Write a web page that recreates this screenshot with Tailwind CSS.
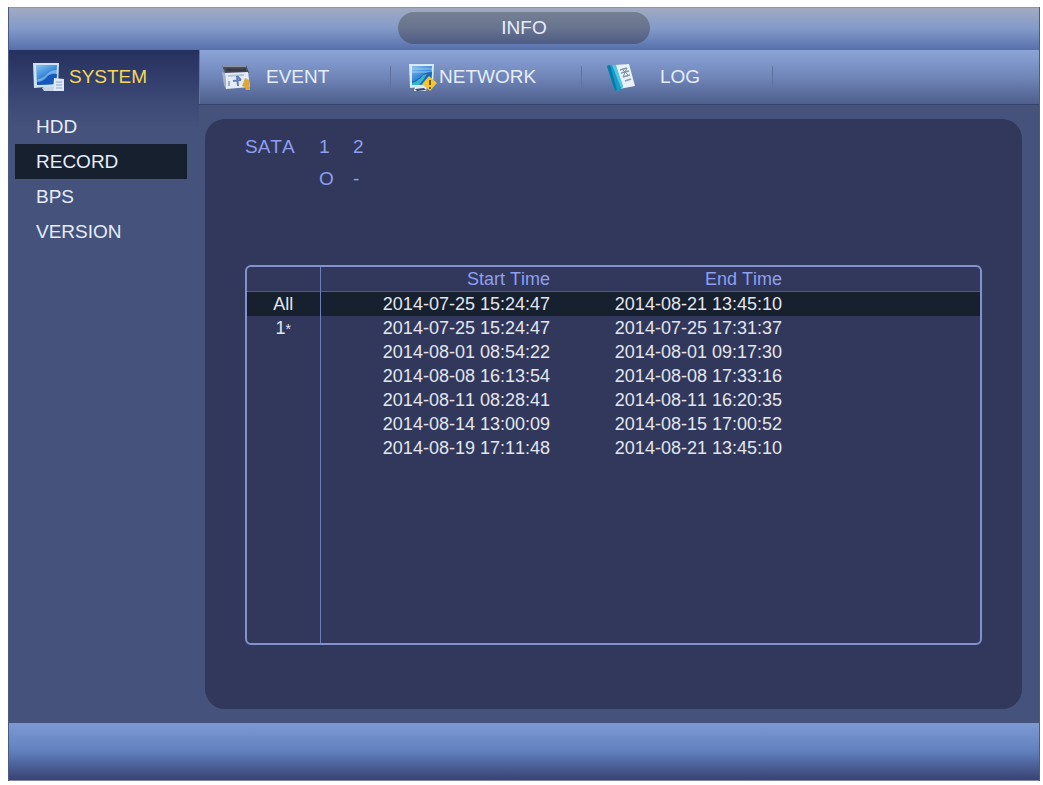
<!DOCTYPE html>
<html lang="en">
<head>
    <meta charset="UTF-8">
    <meta name="viewport" content="width=device-width, initial-scale=1.0">
    <title>INFO</title>
    <script src="https://cdn.jsdelivr.net/npm/@tailwindcss/browser@4"></script>
</head>
<body class="bg-white font-['Liberation_Sans',sans-serif] [font-kerning:none]">
  <div class="flex min-h-screen flex-col pt-[7px] pr-[3px] pb-1 pl-2">
    <div class="flex flex-1 flex-col border-x border-[#4b5a82] bg-[#44527c] text-[19px] leading-6 text-[#e6edfb]">

      <!-- title bar -->
      <header class="flex h-[43px] items-start justify-center border-t border-[#8c94a6] bg-linear-to-b from-[#a0abc0] via-[#8299c9] to-[#5670ab] pt-1">
        <h1 class="flex h-8 w-[252px] items-center justify-center rounded-full bg-linear-to-b from-[#767f93] via-[#67738f] to-[#4e5c84]">INFO</h1>
      </header>

      <!-- tabs -->
      <nav class="flex h-[54px] bg-linear-to-b from-[#8ba4d8] via-[#7086b9] to-[#4e5f8b]">
        <button class="flex w-[190px] items-center gap-1 bg-linear-to-b from-[#263060] to-[#3d4a76] pl-6 text-[#f2d95c]">
          <svg class="h-8 w-8" viewBox="0 0 32 32">
            <defs>
              <linearGradient id="screen" x1="0" y1="0" x2="0.6" y2="1">
                <stop offset="0" stop-color="#8cc4ee"/>
                <stop offset="0.5" stop-color="#3f8edb"/>
                <stop offset="1" stop-color="#1d5cb8"/>
              </linearGradient>
            </defs>
            <path d="M9 27 L15 24 L21 25 L20 30 L11 30Z" fill="#c3d3e6"/>
            <path d="M0 2 L26 2 L25 25 L1 27Z" fill="#cfe2f2"/>
            <path d="M3 4 L24 4 L23 23 L4 24Z" fill="url(#screen)"/>
            <path d="M4 20 Q9 20 13 15 Q17 11 24 13 L23 23 L4 24Z" fill="#1557bd"/>
            <path d="M5 18 Q10 18 14 13 Q18 9 24 9 L24 13 Q17 12 13 17 Q9 21 4 21Z" fill="#9dd0f5" opacity="0.6"/>
            <path d="M21 17 L31 18 L31 30 L20 30Z" fill="#dce8f5"/>
            <path d="M23 21h6M23 24h6M23 27h6" stroke="#8fa9ca" stroke-width="1"/>
          </svg>
          SYSTEM
        </button>
        <button class="flex w-[191px] items-center gap-[14px] border-l border-[#6077a8] pl-5">
          <svg class="h-8 w-8" viewBox="0 0 32 32">
            <path d="M2 4 L26 4 L29 12 L5 12Z" fill="#4a4f59"/>
            <path d="M2 4 L26 4 L26 6 L3 6Z" fill="#8b929d"/>
            <path d="M6 9h20" stroke="#363b45" stroke-width="3"/>
            <path d="M5 12 L28 11 L30 26 L6 28Z" fill="#e4ecf6"/>
            <path d="M2 11 L5 12 L6 28 L4 24Z" fill="#a5b4cc"/>
            <path d="M8 15 L24 14" stroke="#b4c3d8" stroke-width="2"/>
            <path d="M17 15 L18 25 M13 20 L21 19 M17 15 L21 19" stroke="#5c7fb8" stroke-width="2"/>
            <path d="M9 20v5" stroke="#9cadcb" stroke-width="2"/>
            <path d="M25 17 L29 19 L30 29 L26 29 L25 26 L22 25Z" fill="#dfa739"/>
          </svg>
          EVENT
        </button>
        <div class="my-4 border-l border-[#60739f]"></div>
        <button class="flex w-[190px] items-center pl-4">
          <svg class="h-8 w-8" viewBox="0 0 32 32">
            <path d="M8 26 L15 24 L20 26 L19 30 L7 30Z" fill="#e4edf7"/>
            <path d="M8 28 L17 27 L19 29 L10 30Z" fill="#394a6a"/>
            <path d="M2 3 L27 3 L26 25 L3 27Z" fill="#d8e9f4"/>
            <path d="M5 5 L25 5 L24 23 L5 24Z" fill="url(#screen)"/>
            <path d="M5 8h20M5 11h19" stroke="#bfe5f3" stroke-width="1" opacity="0.7"/>
            <path d="M5 20 Q10 20 14 15 Q18 11 25 11 L24 23 L5 24Z" fill="#1768b9"/>
            <path d="M5 22 Q12 20 16 14 L20 13 Q16 20 12 24 L5 24Z" fill="#39b4cf"/>
            <path d="M22 15 L30 22 L23 30 L15 23Z" fill="#f3c52f"/>
            <path d="M23 19v5M23 26v2" stroke="#745b16" stroke-width="2"/>
          </svg>
          NETWORK
        </button>
        <div class="my-4 border-l border-[#60739f]"></div>
        <button class="flex w-[190px] items-center gap-[22px] pl-6">
          <svg class="h-8 w-8" viewBox="0 0 32 32">
            <path d="M9 4 L23 3 L29 25 L13 28Z" fill="#e8f2fa"/>
            <path d="M1 5 L9 4 L17 26 L11 31 L8 28Z" fill="#159cc7"/>
            <path d="M1 5 L4 4 L11 29 L9 30Z" fill="#087aa9"/>
            <path d="M6 4 L10 4 L17 25 L15 27Z" fill="#56c5e4"/>
            <path d="M14 9l7-2M15 12l8-2M17 16l7-2M19 20l6-2" stroke="#8797aa" stroke-width="1.5"/>
            <path d="M16 8l6 6M21 7l-4 9" stroke="#8291a4" stroke-width="1"/>
          </svg>
          LOG
        </button>
        <div class="my-4 border-l border-[#60739f]"></div>
      </nav>

      <main class="flex flex-1">
        <aside class="mr-[6px] w-[190px] bg-linear-to-b from-[#3d4a76] to-[#44527c] to-[24px]">
          <ul class="pt-[5px] pr-3 pl-[6px]">
            <li><a href="#" class="block h-[35px] pl-[21px] leading-[35px]">HDD</a></li>
            <li><a href="#" class="block h-[35px] bg-[#17202e] pl-[21px] leading-[35px]">RECORD</a></li>
            <li><a href="#" class="block h-[35px] pl-[21px] leading-[35px]">BPS</a></li>
            <li><a href="#" class="block h-[35px] pl-[21px] leading-[35px]">VERSION</a></li>
          </ul>
        </aside>

        <section class="-ml-[6px] flex flex-1 flex-col border-t border-[#35426c] pt-[14px] pr-[17px] pb-[14px] pl-[6px]">
          <div class="flex flex-1 flex-col rounded-[20px] bg-[#31385b] px-10 pt-3 pb-16">
            <div class="grid h-[134px] grid-cols-[74px_34px_34px] content-start text-[#8e9ff0]">
              <span class="leading-8">SATA</span>
              <span class="leading-8">1</span>
              <span class="leading-8">2</span>
              <span class="col-start-2 leading-8">O</span>
              <span class="leading-8">-</span>
            </div>

            <!-- record list -->
            <div class="grid flex-1 overflow-hidden rounded-md border-2 border-[#8292cc]">
              <table class="w-full table-fixed text-right text-[18px] leading-6 text-[#e3e6ee]">
                <colgroup>
                  <col class="w-[73px]">
                  <col class="w-[230px]">
                  <col class="w-[232px]">
                  <col>
                </colgroup>
                <thead>
                  <tr class="h-6 border-b border-[#4d5a8c] text-[#8e9ff0]">
                    <th class="border-r border-[#6f7fbd]"></th>
                    <th class="font-normal">Start Time</th>
                    <th class="font-normal">End Time</th>
                    <th></th>
                  </tr>
                </thead>
                <tbody>
                  <tr class="h-6 bg-[#17202e]">
                    <td class="border-r border-[#6f7fbd] text-center">All</td>
                    <td>2014-07-25 15:24:47</td>
                    <td>2014-08-21 13:45:10</td>
                    <td></td>
                  </tr>
                  <tr class="h-6">
                    <td class="border-r border-[#6f7fbd] text-center">1<span class="text-sm leading-4">*</span></td>
                    <td>2014-07-25 15:24:47</td>
                    <td>2014-07-25 17:31:37</td>
                    <td></td>
                  </tr>
                  <tr class="h-6">
                    <td class="border-r border-[#6f7fbd]"></td>
                    <td>2014-08-01 08:54:22</td>
                    <td>2014-08-01 09:17:30</td>
                    <td></td>
                  </tr>
                  <tr class="h-6">
                    <td class="border-r border-[#6f7fbd]"></td>
                    <td>2014-08-08 16:13:54</td>
                    <td>2014-08-08 17:33:16</td>
                    <td></td>
                  </tr>
                  <tr class="h-6">
                    <td class="border-r border-[#6f7fbd]"></td>
                    <td>2014-08-11 08:28:41</td>
                    <td>2014-08-11 16:20:35</td>
                    <td></td>
                  </tr>
                  <tr class="h-6">
                    <td class="border-r border-[#6f7fbd]"></td>
                    <td>2014-08-14 13:00:09</td>
                    <td>2014-08-15 17:00:52</td>
                    <td></td>
                  </tr>
                  <tr class="h-6">
                    <td class="border-r border-[#6f7fbd]"></td>
                    <td>2014-08-19 17:11:48</td>
                    <td>2014-08-21 13:45:10</td>
                    <td></td>
                  </tr>
                  <!-- empty space below the records -->
                  <tr>
                    <td class="border-r border-[#6f7fbd]"></td>
                    <td></td>
                    <td></td>
                    <td></td>
                  </tr>
                </tbody>
              </table>
            </div>
          </div>
        </section>
      </main>

      <footer class="h-[58px] border-b border-[#7d86a8] bg-linear-to-b from-[#7e9ad4] via-[#6080bd] to-[#394274]"></footer>
    </div>
  </div>
</body>
</html>
